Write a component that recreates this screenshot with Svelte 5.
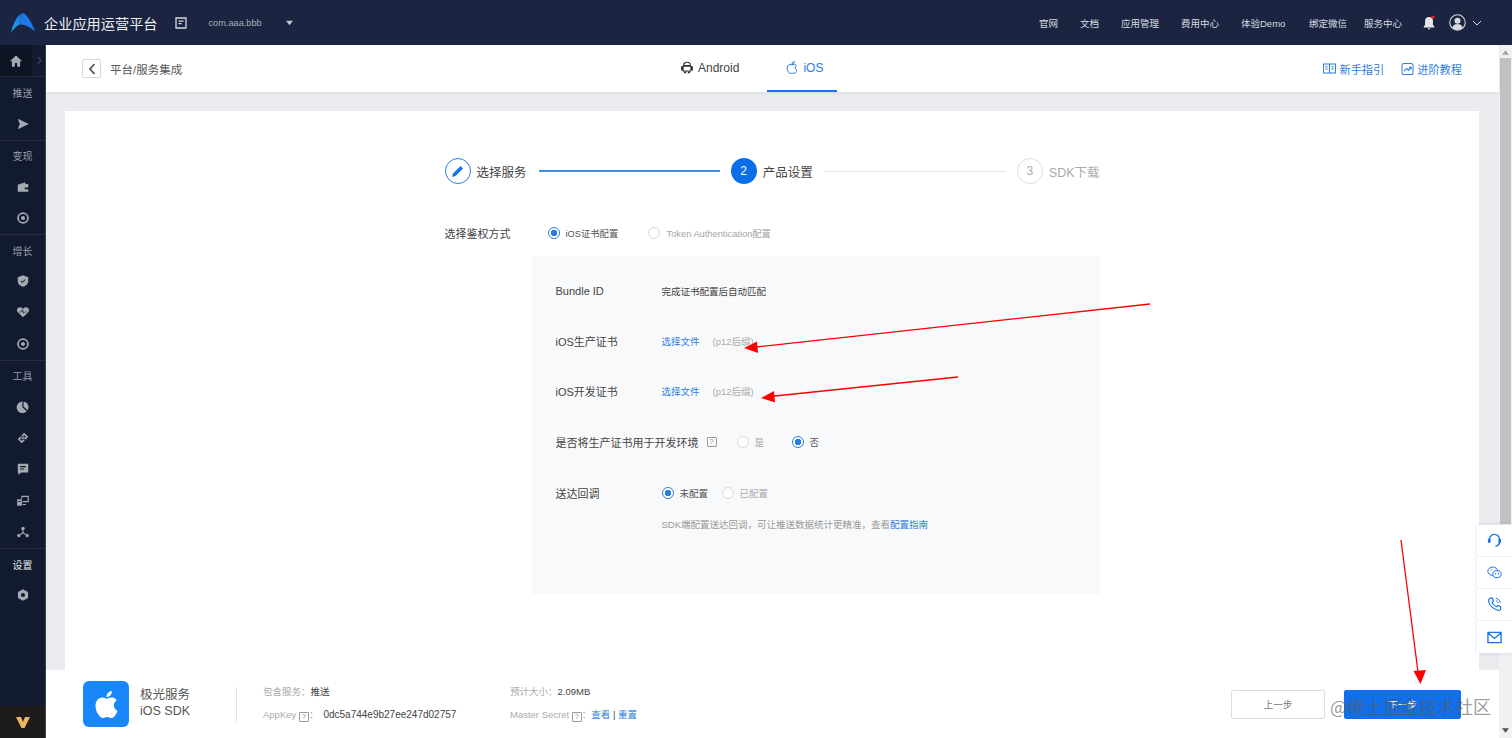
<script>
  const apple = 'M12.152 6.896c-.948 0-2.415-1.078-3.96-1.04-2.04.027-3.91 1.183-4.961 3.014-2.117 3.675-.546 9.103 1.519 12.09 1.013 1.454 2.208 3.09 3.792 3.039 1.52-.065 2.09-.987 3.935-.987 1.831 0 2.35.987 3.96.948 1.637-.026 2.676-1.48 3.676-2.948 1.156-1.688 1.636-3.325 1.662-3.415-.039-.013-3.182-1.221-3.22-4.857-.026-3.04 2.48-4.494 2.597-4.559-1.429-2.09-3.623-2.324-4.39-2.376-2-.156-3.675 1.09-4.61 1.09zM15.53 3.83c.843-1.012 1.4-2.427 1.245-3.83-1.207.052-2.662.805-3.532 1.818-.78.896-1.454 2.338-1.273 3.714 1.338.104 2.715-.688 3.559-1.701'

  const ring = 'M12 2a10 10 0 1 0 0 20 10 10 0 0 0 0-20zm0 3a7 7 0 1 1 0 14 7 7 0 0 1 0-14zm0 3.5a3.5 3.5 0 1 0 0 7 3.5 3.5 0 0 0 0-7z'

  const side = [
    { label: '推送', top: true },
    { icon: 'M3 3l19 9-19 9 3.5-9L3 3z' },
    { label: '变现', top: true },
    { icon: 'M3 8l13-4v3h5v13H3V8zm12 5v3h6v-3h-6z' },
    { icon: ring },
    { label: '增长', top: true },
    { icon: 'M12 2l9 3.5V13c0 4.5-4 7.5-9 9-5-1.5-9-4.5-9-9V5.500L12 2zm-4 10.500l3 3 5.500-5.500-1.200-1.200-4.300 4.300-1.800-1.800L8 12.500z' },
    { icon: 'M12 21L3 12.500C.5 9.800 1.500 4 7 4c2.300 0 4 1.300 5 3 1-1.700 2.700-3 5-3 5.500 0 6.500 5.800 4 8.500L12 21zM5 12.500h4l1.500-3 3 5.500 1.500-2.500h4v-1h-3.500L14 13l-3.500-6-2 4.500H5v1z' },
    { icon: ring },
    { label: '工具', top: true },
    { icon: 'M11 2.500v10l7.500 6.800A10 10 0 1 1 11 2.500zM13 2.500A10 10 0 0 1 20 17.500l-7-6.300V2.500z' },
    { icon: 'M14 3l7 7-5 5-2-2 3-3-3-3-3 3-2-2 5-5zM10 21l-7-7 5-5 2 2-3 3 3 3 3-3 2 2-5 5zM9.500 13l4-4 1.500 1.500-4 4L9.500 13z' },
    { icon: 'M3 3h18v15H9l-5 4v-4H3V3zm4 4v2h10V7H7zm0 4v2h7v-2H7z' },
    { icon: 'M9 3h13v11H11v-2h9V5H11v3H9V3zM2 9h8v11H2V9zm2 3v1.500h4V12H4zm7 5h6v2h-6v-2z' },
    { icon: 'M12 3a3 3 0 1 1 0 6 3 3 0 0 1 0-6zM11 9h2v4l5 3-1 1.700-5-3-5 3L6 16l5-3V9zM5 15a3 3 0 1 1 0 6 3 3 0 0 1 0-6zM19 15a3 3 0 1 1 0 6 3 3 0 0 1 0-6z' },
    { label: '设置', top: true, active: true },
    { icon: 'M12 2l8.700 5v10L12 22l-8.700-5V7L12 2zm0 6.500a3.500 3.500 0 1 0 0 7 3.500 3.500 0 0 0 0-7z' },
  ]

  const nav = [
    { text: '官网', w: 41 },
    { text: '文档', w: 41 },
    { text: '应用管理', w: 60 },
    { text: '费用中心', w: 60 },
    { text: '体验Demo', w: 68 },
    { text: '绑定微信', w: 55 },
    { text: '服务中心', w: 57 },
  ]
</script>

{#snippet radio(on)}
  <span class="radio" class:on></span>
{/snippet}

{#snippet help()}
  <span class="help">?</span>
{/snippet}

<div class="app">
  <header class="topbar">
    <svg class="logo" viewBox="0 0 24 20">
      <defs>
        <linearGradient id="lg" x1="0" y1="1" x2="1" y2="0">
          <stop offset="0" stop-color="#1fb4f5" />
          <stop offset="1" stop-color="#1565d8" />
        </linearGradient>
      </defs>
      <path d="M12 0C6.500 1 2.500 10 0 19.500c3-4 6.500-7.500 9-8 .5-4 1.500-8 3-11.500z" fill="url(#lg)" />
      <path d="M12 0c4.500 2 9 10 12 18.500-4-3.500-9-7-15-7 .5-4 1.500-8 3-11.500z" fill="#1e78e6" />
    </svg>
    <span class="brand">企业应用运营平台</span>
    <svg class="brand-ico" viewBox="0 0 12 12">
      <path d="M1 1h10v10H1z" fill="none" stroke="#d5d8de" stroke-width="1.300" />
      <path d="M3.500 3.500h5v1.300h-5zM3.500 6h3v1.300h-3z" fill="#d5d8de" />
    </svg>
    <span class="pkg">com.aaa.bbb</span>
    <svg class="pkg-caret" viewBox="0 0 10 7"><path d="M1 1h8L5 6z" fill="#c5c9d0" /></svg>

    <nav class="nav">
      {#each nav as item}
        <span class="nav-item" style:width="{item.w}px">{item.text}</span>
      {/each}
    </nav>
    <svg class="bell" viewBox="0 0 16 18">
      <path d="M8 2a4.500 4.500 0 0 0-4.500 4.500V11L2 13v1h12v-1l-1.500-2V6.500A4.500 4.500 0 0 0 8 2zM6.500 15h3a1.500 1.500 0 0 1-3 0z" fill="#e4e6ea" />
      <circle cx="12.500" cy="2.500" r="1.800" fill="#f5222d" />
    </svg>
    <svg class="avatar" viewBox="0 0 16 16">
      <circle cx="8" cy="8" r="7.300" fill="none" stroke="#d8dbe0" stroke-width="1" />
      <circle cx="8" cy="6.300" r="2.800" fill="#d8dbe0" />
      <path d="M3 13c.8-2.500 2.800-3.500 5-3.500s4.200 1 5 3.500c-1.300 1.300-3 2-5 2s-3.700-.7-5-2z" fill="#d8dbe0" />
    </svg>
    <svg class="user-caret" viewBox="0 0 10 6"><path d="M1 1l4 4 4-4" fill="none" stroke="#d8dbe0" stroke-width="1" /></svg>
  </header>

  <div class="body">
    <aside class="sidebar">
      <div class="home-row">
        <div class="home">
          <svg class="side-ico" viewBox="0 0 24 24"><path d="M12 2.500L1.500 12.500H5V22h5v-6.500h4V22h5v-9.500h3.500L12 2.500z" /></svg>
        </div>
        <svg class="home-arrow" viewBox="0 0 6 10"><path d="M1 1l4 4-4 4" fill="none" stroke="#6d7382" stroke-width="1" /></svg>
      </div>
      {#each side as item}
        <div class="side-item" class:top={item.top} class:active={item.active}>
          {#if item.icon}
            <svg class="side-ico" viewBox="0 0 24 24"><path d={item.icon} fill-rule="evenodd" /></svg>
          {:else}
            {item.label}
          {/if}
        </div>
      {/each}
      <div class="vtile">
        <svg viewBox="0 0 14 11"><path d="M0 0h5l2 5 2-5h5L8.500 11h-3L0 0z" fill="#eeb65c" /></svg>
      </div>
    </aside>

    <main class="main">
      <div class="page">
        <div class="subheader">
          <div class="crumb">
            <span class="back">
              <svg viewBox="0 0 8 12"><path d="M6.500 1L2 6l4.500 5" fill="none" stroke="#555" stroke-width="1.800" /></svg>
            </span>
            <span>平台/服务集成</span>
          </div>
          <div class="tabs">
            <div class="tab">
              <svg viewBox="0 0 14 14">
                <path d="M3 4.800a4 3.800 0 0 1 8 0zM2.500 5.600h9V11h-1.500v2H8.500v-2h-3v2H4v-2H2.500zM.7 6h1v4h-1zM12.300 6h1v4h-1z" fill="none" stroke="#333" stroke-width="1.200" />
              </svg>
              Android
            </div>
            <div class="tab current">
              <svg viewBox="0 0 24 24"><path d={apple} fill="none" stroke="#2a7de1" stroke-width="2" /></svg>
              iOS
            </div>
          </div>
          <div class="guides">
            <span class="guide">
              <svg viewBox="0 0 14 12"><path d="M.6.6h12.800v9.800H.6zM7 .6v9.800M2.500 3.500h2.500M9 3.500h2.500M2.500 6h2.500M9 6h2.500" fill="none" stroke="#2b7de0" stroke-width="1.100" /></svg>
              新手指引
            </span>
            <span class="guide second">
              <svg viewBox="0 0 13 13"><path d="M2.500.6h8a2 2 0 0 1 2 2v8a2 2 0 0 1-2 2h-8a2 2 0 0 1-2-2v-8a2 2 0 0 1 2-2zM2.500 9l3-3 2 2 3-3.500M8 4.500h2.500V7" fill="none" stroke="#2b7de0" stroke-width="1.100" /></svg>
              进阶教程
            </span>
          </div>
        </div>

        <div class="canvas">
          <section class="card">
            <div class="form">
              <div class="steps">
                <span class="step-dot done">
                  <svg viewBox="0 0 14 14"><path d="M1 13l1-3.500L9.500 2 12 4.500 4.500 12 1 13z" fill="#1673e6" /></svg>
                </span>
                <span class="step-text">选择服务</span>
                <span class="line passed"></span>
                <span class="step-dot now">2</span>
                <span class="step-text">产品设置</span>
                <span class="line"></span>
                <span class="step-dot todo">3</span>
                <span class="step-text muted">SDK下载</span>
              </div>

              <div class="auth">
                <span class="auth-label">选择鉴权方式</span>
                {@render radio(true)}
                <span class="auth-first">iOS证书配置</span>
                {@render radio(false)}
                <span class="auth-second">Token Authentication配置</span>
              </div>

              <div class="panel">
                <div class="row">
                  <span class="label">Bundle ID</span>
                  <span class="value">完成证书配置后自动匹配</span>
                </div>
                <div class="row">
                  <span class="label">iOS生产证书</span>
                  <span class="link">选择文件</span>
                  <span class="suffix">(p12后缀)</span>
                </div>
                <div class="row">
                  <span class="label">iOS开发证书</span>
                  <span class="link">选择文件</span>
                  <span class="suffix">(p12后缀)</span>
                </div>
                <div class="row wide">
                  <span class="label">是否将生产证书用于开发环境</span>
                  {@render help()}
                  <span class="choices env">
                    {@render radio(false)}<span class="opt off">是</span>
                    {@render radio(true)}<span class="opt">否</span>
                  </span>
                </div>
                <div class="row callback">
                  <span class="label">送达回调</span>
                  <span class="choices">
                    {@render radio(true)}<span class="opt">未配置</span>
                    {@render radio(false)}<span class="opt off">已配置</span>
                  </span>
                </div>
                <p class="note">SDK端配置送达回调，可让推送数据统计更精准，查看<span class="link">配置指南</span></p>
              </div>
            </div>
          </section>
        </div>

        <footer class="footer">
          <div class="tile">
            <svg viewBox="0 0 24 24"><path d={apple} fill="#fff" /></svg>
          </div>
          <div class="names">
            <div>极光服务</div>
            <div>iOS SDK</div>
          </div>
          <div class="info first">
            <div><span class="key">包含服务：</span><span class="val">推送</span></div>
            <div><span class="key">AppKey {@render help()}：</span><span class="val code">0dc5a744e9b27ee247d02757</span></div>
          </div>
          <div class="info">
            <div><span class="key">预计大小：</span><span class="val">2.09MB</span></div>
            <div><span class="key">Master Secret {@render help()}：</span><span class="link">查看</span> <span class="val">|</span> <span class="link">重置</span></div>
          </div>
          <div class="actions">
            <button class="btn">上一步</button>
            <button class="btn primary">下一步</button>
          </div>
        </footer>
      </div>

      <div class="scrollbar">
        <svg class="sb-arrow" viewBox="0 0 8 5"><path d="M4 0l4 5H0z" fill="#a3a3a3" /></svg>
        <div class="thumb"></div>
        <svg class="sb-arrow down" viewBox="0 0 8 5"><path d="M0 0h8L4 5z" fill="#505050" /></svg>
      </div>
    </main>
  </div>

  <div class="float-tools">
    <div class="tool">
      <svg viewBox="0 0 16 16"><path d="M2.500 9V7a5.500 5.500 0 0 1 11 0v2c0 2.500-1.500 4.500-4.500 5" fill="none" stroke="#1673e6" stroke-width="1.500" /><path d="M1 6.500h2.800v4H1zM12.200 6.500H15v4h-2.800z" fill="#1673e6" /></svg>
    </div>
    <div class="tool">
      <svg viewBox="0 0 18 16"><ellipse cx="7" cy="6.500" rx="6" ry="5" fill="none" stroke="#1673e6" stroke-width="1.200" /><ellipse cx="12" cy="10" rx="5" ry="4.200" fill="#fff" stroke="#1673e6" stroke-width="1.200" /><circle cx="10.300" cy="9.500" r=".8" fill="#1673e6" /><circle cx="13.700" cy="9.500" r=".8" fill="#1673e6" /><circle cx="5" cy="5" r=".7" fill="#1673e6" /></svg>
    </div>
    <div class="tool">
      <svg viewBox="0 0 16 16"><path d="M3 1.500l2.500-.5 1.500 3.500-1.500 1.500c.8 2 2.300 3.500 4.500 4.500l1.500-1.500 3.300 1.500-.3 2.500c-.5 1-2 1.500-3 1.200C6 12.500 2.500 8.500 1.500 4c0-1 .5-2 1.500-2.500z" fill="none" stroke="#1673e6" stroke-width="1.200" /><path d="M9.500 1.500c2.500.3 4.500 2.300 4.800 4.800M9.500 4c1.200.2 2.200 1.200 2.400 2.400" fill="none" stroke="#1673e6" stroke-width="1" /></svg>
    </div>
    <div class="tool">
      <svg viewBox="0 0 16 14"><path d="M1 1.500h14v11H1zM1 2l7 6 7-6" fill="none" stroke="#1673e6" stroke-width="1.400" /></svg>
    </div>
  </div>

  <svg class="marks" viewBox="0 0 1512 738">
    <path d="M1150 304L752 347.500M958 377L770 396.500M1401 540L1418 672" fill="none" stroke="#f00" stroke-width="1.300" />
    <path d="M744 348l13-6.500 1 11.500zM761 398l13-7 1 11.500zM1420.500 684l-7-13 12.500-1z" fill="#f00" />
  </svg>
  <span class="watermark">@稀土掘金技术社区</span>
</div>

<style>
  :global(body) {
    margin: 0;
    overflow: hidden;
  }

  .app {
    position: relative;
    width: 1512px;
    height: 738px;
    display: flex;
    flex-direction: column;
    overflow: hidden;
    font-family: "Liberation Sans", "Noto Sans CJK SC", sans-serif;
    font-size: 10px;
    color: #444;
    background: #fff;
  }

  /* top bar */
  .topbar {
    flex: 0 0 45px;
    display: flex;
    align-items: center;
    background: #1b2541;
    color: #d8dbe0;
  }

  .logo {
    width: 24px;
    height: 20px;
    margin-left: 11px;
  }

  .brand {
    margin-left: 9px;
    font-size: 14.200px;
    color: #eceef1;
    white-space: nowrap;
  }

  .brand-ico {
    width: 12px;
    height: 12px;
    margin-left: 17px;
  }

  .pkg {
    margin-left: 22px;
    font-size: 9.200px;
    color: #a9aeb9;
  }

  .pkg-caret {
    width: 9px;
    height: 6px;
    margin-left: 23px;
  }

  .nav {
    display: flex;
    margin-left: auto;
    font-size: 9.500px;
  }

  .nav-item {
    white-space: nowrap;
  }

  .bell {
    width: 14px;
    height: 16px;
    margin-left: 1px;
  }

  .avatar {
    width: 17px;
    height: 17px;
    margin-left: 13px;
  }

  .user-caret {
    width: 10px;
    height: 6px;
    margin: 0 30px 0 6px;
  }

  .body {
    flex: 1;
    display: flex;
    min-height: 0;
  }

  /* sidebar */
  .sidebar {
    flex: 0 0 45px;
    display: flex;
    flex-direction: column;
    background: #111a2e;
    border-right: 1px solid #3b4250;
    box-sizing: content-box;
    color: #989da8;
    font-size: 10px;
  }

  .home-row {
    flex: 0 0 32px;
    display: flex;
    align-items: center;
    border-bottom: 1px solid #242c3e;
    box-sizing: border-box;
  }

  .home {
    width: 32px;
    height: 31px;
    display: flex;
    align-items: center;
    justify-content: center;
    background: #0d1424;
  }

  .home-arrow {
    width: 5px;
    height: 9px;
    margin-left: 5px;
  }

  .side-item {
    flex: 0 0 31.400px;
    display: flex;
    align-items: center;
    justify-content: center;
    box-sizing: border-box;
  }

  .side-item.top {
    border-top: 1px solid #242c3e;
  }

  .home-row + .side-item.top {
    border-top: none;
  }

  .side-item.active {
    color: #e6e8ec;
  }

  .side-ico {
    width: 14px;
    height: 14px;
    fill: #a5a9b1;
  }

  .vtile {
    height: 32px;
    margin-top: auto;
    display: flex;
    align-items: center;
    justify-content: center;
    background: #1d1b1c;
  }

  .vtile svg {
    width: 14px;
    height: 11px;
  }

  /* main */
  .main {
    flex: 1;
    min-width: 0;
    display: flex;
  }

  .page {
    flex: 1;
    min-width: 0;
    display: flex;
    flex-direction: column;
  }

  .subheader {
    flex: 0 0 47px;
    display: flex;
    align-items: stretch;
    box-sizing: border-box;
    background: #fff;
    box-shadow: 0 1px 3px rgba(0, 0, 0, 0.08);
    position: relative;
    font-size: 12px;
  }

  .crumb {
    flex: 0 0 615px;
    display: flex;
    align-items: center;
    gap: 9px;
    padding-left: 36px;
    box-sizing: border-box;
    font-size: 11.500px;
    color: #555;
  }

  .back {
    width: 19px;
    height: 19px;
    display: flex;
    align-items: center;
    justify-content: center;
    box-sizing: border-box;
    border: 1px solid #d9d9d9;
    border-radius: 2px;
  }

  .back svg {
    width: 8px;
    height: 12px;
  }

  .tabs {
    display: flex;
    gap: 8px;
  }

  .tab {
    display: flex;
    align-items: center;
    gap: 5px;
    padding: 0 20px;
    font-size: 12px;
    color: #444;
    box-sizing: border-box;
    border-bottom: 2px solid transparent;
  }

  .tab svg {
    width: 12px;
    height: 13px;
  }

  .tab.current {
    width: 70px;
    padding: 0 0 0 19px;
    color: #2a7de1;
    border-bottom-color: #1673e6;
  }

  .guides {
    margin-left: auto;
    padding-right: 37px;
    display: flex;
    align-items: center;
    font-size: 11.200px;
    color: #2b7de0;
  }

  .guide {
    display: flex;
    align-items: center;
    gap: 3px;
  }

  .guide.second {
    margin-left: 17px;
  }

  .guide svg {
    width: 13px;
    height: 12px;
  }

  .canvas {
    flex: 1;
    min-height: 0;
    display: flex;
    padding: 19px 20px 0 19px;
    background: #e9ebee;
  }

  .card {
    flex: 1;
    background: #fff;
  }

  .form {
    width: 655px;
    margin: 0 auto;
    padding-top: 47px;
  }

  /* steps */
  .steps {
    display: flex;
    align-items: center;
    height: 26px;
    font-size: 12.500px;
    color: #444;
  }

  .step-dot {
    flex: 0 0 26px;
    height: 26px;
    display: flex;
    align-items: center;
    justify-content: center;
    box-sizing: border-box;
    border-radius: 50%;
    font-size: 12px;
  }

  .step-dot.done {
    border: 1px solid #2a7de1;
  }

  .step-dot.done svg {
    width: 14px;
    height: 14px;
  }

  .step-dot.now {
    background: #0a6ee8;
    color: #fff;
  }

  .step-dot.todo {
    border: 1px solid #ddd;
    color: #aaa;
  }

  .step-text {
    margin-left: 6px;
    white-space: nowrap;
  }

  .step-text.muted {
    color: #aaa;
  }

  .line {
    flex: 1;
    height: 1px;
    margin: 0 11px 0 12px;
    background: #e6e6e6;
  }

  .line.passed {
    height: 1.500px;
    background: #3f8fe2;
  }

  /* auth */
  .auth {
    display: flex;
    align-items: center;
    height: 14px;
    margin-top: 42px;
    font-size: 9.300px;
  }

  .auth-label {
    width: 103px;
    font-size: 11px;
    color: #444;
  }

  .auth-first {
    width: 82px;
    margin-left: 6px;
    color: #555;
  }

  .auth-second {
    margin-left: 7px;
    color: #a5a5a5;
  }

  .radio {
    flex: 0 0 12px;
    width: 12px;
    height: 12px;
    display: inline-block;
    box-sizing: border-box;
    border: 1px solid #dcdcdc;
    border-radius: 50%;
    background: #fff;
  }

  .radio.on {
    border-color: #2a7de1;
    background: radial-gradient(circle, #2a7de1 0 3px, #fff 3.500px);
  }

  /* panel */
  .panel {
    height: 338px;
    margin: 16px 0 0 87px;
    padding: 10px 0 0 24px;
    box-sizing: border-box;
    background: #f8f9fb;
    font-size: 9.500px;
  }

  .row {
    display: flex;
    align-items: center;
    height: 50px;
  }

  .label {
    flex: 0 0 106px;
    font-size: 11px;
    color: #444;
    white-space: nowrap;
  }

  .value {
    color: #444;
  }

  .link {
    color: #2b7de0;
  }

  .suffix {
    margin-left: 13px;
    color: #aaa;
  }

  .row.wide {
    height: 51px;
  }

  .row.wide .label {
    flex: 0 0 auto;
  }

  .row.callback {
    margin-top: 1px;
  }

  .help {
    display: inline-flex;
    align-items: center;
    justify-content: center;
    width: 10px;
    height: 10px;
    box-sizing: border-box;
    border: 1px solid #999;
    border-radius: 1px;
    color: #888;
    font-size: 7px;
    line-height: 1;
    vertical-align: -1px;
  }

  .row.wide .help {
    margin-left: 8px;
  }

  .choices {
    display: flex;
    align-items: center;
    color: #555;
  }

  .choices.env {
    margin-left: 20px;
  }

  .opt {
    width: 42px;
    margin-left: 6px;
    font-size: 9.500px;
  }

  .env .opt {
    width: 37px;
  }

  .opt.off {
    color: #aaa;
  }

  .note {
    margin: -1px 0 0 106px;
    color: #999;
    font-size: 9.500px;
  }

  /* footer */
  .footer {
    flex: 0 0 68px;
    display: flex;
    align-items: center;
    box-sizing: border-box;
    padding: 0 38px 0 37px;
    background: #fff;
    font-size: 9.500px;
  }

  .tile {
    flex: 0 0 46px;
    height: 46px;
    display: flex;
    align-items: center;
    justify-content: center;
    border-radius: 6px;
    background: #1787fb;
  }

  .tile svg {
    width: 27px;
    height: 29px;
  }

  .names {
    flex: 0 0 97px;
    margin-left: 11px;
    box-sizing: border-box;
    height: 35px;
    border-right: 1px solid #e4e4e4;
    font-size: 12.500px;
    line-height: 16px;
    color: #555;
  }

  .info {
    display: flex;
    flex-direction: column;
    gap: 11px;
    line-height: 12px;
    white-space: nowrap;
  }

  .info.first {
    width: 247px;
    margin-left: 26px;
  }

  .key {
    color: #aaa;
  }

  .val {
    color: #444;
  }

  .code {
    margin-left: 5px;
    font-size: 10px;
  }

  .actions {
    margin-left: auto;
    display: flex;
    gap: 19px;
  }

  .btn {
    width: 94px;
    height: 29px;
    padding: 0;
    box-sizing: border-box;
    border: 1px solid #ddd;
    border-radius: 2px;
    background: #fff;
    color: #777;
    font: inherit;
  }

  .btn.primary {
    width: 117px;
    border-color: #0f6fec;
    background: #0f6fec;
    color: #fff;
  }

  /* scrollbar */
  .scrollbar {
    flex: 0 0 13px;
    display: flex;
    flex-direction: column;
    align-items: center;
    background: #f1f1f1;
  }

  .sb-arrow {
    flex: 0 0 5px;
    width: 7px;
    margin: 5px 0 3px;
  }

  .sb-arrow.down {
    margin: auto 0 5px;
  }

  .thumb {
    width: 11px;
    height: 466px;
    background: #c1c1c1;
  }

  /* floating helpers */
  .float-tools {
    position: absolute;
    top: 525px;
    right: 0;
    width: 35px;
    display: flex;
    flex-direction: column;
    background: #fff;
    box-shadow: 0 0 4px rgba(30, 90, 200, 0.18);
  }

  .tool {
    height: 32px;
    display: flex;
    align-items: center;
    justify-content: center;
    border-bottom: 1px solid #eef1f5;
    box-sizing: border-box;
  }

  .tool:last-child {
    border-bottom: none;
  }

  .tool svg {
    width: 15px;
    height: 15px;
  }

  .marks {
    position: absolute;
    inset: 0;
    width: 1512px;
    height: 738px;
    pointer-events: none;
  }

  .watermark {
    position: absolute;
    left: 1330px;
    top: 694px;
    font-size: 18px;
    line-height: 24px;
    white-space: nowrap;
    color: rgba(90, 90, 90, 0.62);
    font-family: "Noto Sans CJK SC", sans-serif;
  }
</style>
